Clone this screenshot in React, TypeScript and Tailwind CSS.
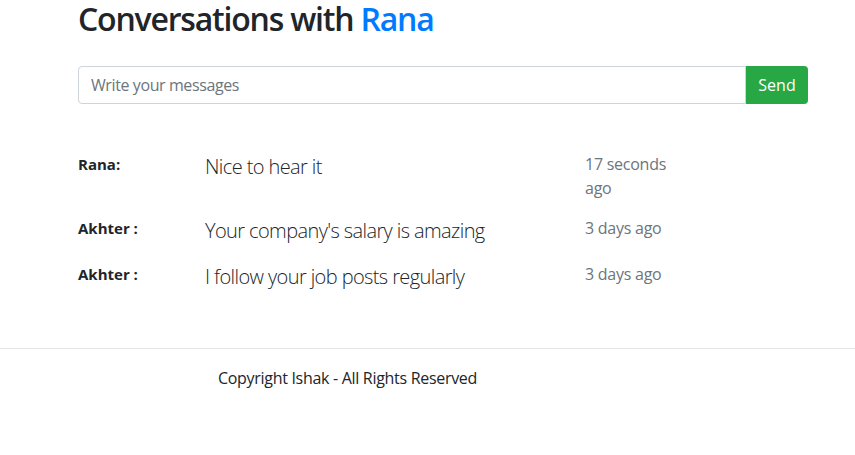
export default function App() {
  const msgs = [
    { name: "Rana:", text: "Nice to hear it", time: "17 seconds ago" },
    { name: "Akhter :", text: "Your company's salary is amazing", time: "3 days ago" },
    { name: "Akhter :", text: "I follow your job posts regularly", time: "3 days ago" },
  ];
  return (
    <div className="min-h-[455px] bg-white text-[#212529]" style={{ fontFamily: '"Open Sans", "Noto Sans", sans-serif' }}>
      <div className="pl-[78px] pr-[47px]">
        <h2 className="m-0 text-[32px] font-semibold leading-[38px] tracking-[-1.2px]">
          Conversations with <span className="text-[#007bff]">Rana</span>
        </h2>
        <div className="mt-[28px] flex h-[38px]">
          <input
            className="h-[38px] flex-1 rounded-l-[4px] border border-[#ced4da] px-3 text-[16px] tracking-[-0.4px] text-[#495057] outline-none placeholder:text-[#6c757d]"
            placeholder="Write your messages"
          />
          <button className="h-[38px] w-[62px] rounded-r-[4px] bg-[#28a745] text-[16px] text-white">Send</button>
        </div>
        <div className="mt-[48px] flex flex-col">
          {msgs.map((m, i) => (
            <div key={i} className="flex pb-4">
              <div className="w-[127px] text-[15px] font-bold leading-[24px]">{m.name}</div>
              <p className="m-0 w-[380px] text-[20px] font-light leading-[30px] tracking-[-0.6px]">{m.text}</p>
              <div className="w-[90px] text-[16px] leading-[24px] tracking-[-0.25px] text-[#6c757d]">{m.time}</div>
            </div>
          ))}
        </div>
      </div>
      <div className="mt-[40px] border-t border-[#e5e5e5] pl-[218px] pt-[17px] text-[16px] leading-[24px] tracking-[-0.3px]">
        Copyright Ishak - All Rights Reserved
      </div>
    </div>
  );
}
